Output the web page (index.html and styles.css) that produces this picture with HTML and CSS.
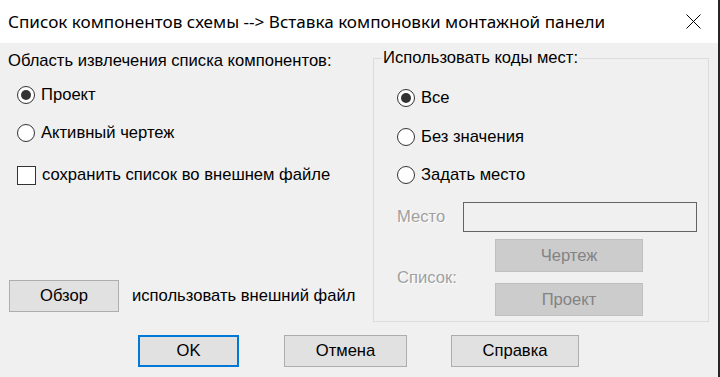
FILE: index.html
```html
<!DOCTYPE html>
<html lang="ru">
<head>
    <meta charset="UTF-8">
    <title>Список компонентов схемы</title>
    <link rel="stylesheet" href="styles.css">
</head>
<body>

    <!-- Title bar -->
    <div class="titlebar">
        <span class="title">Список компонентов схемы --&gt; Вставка компоновки монтажной панели</span>
        <svg class="close" width="15" height="15" viewBox="0 0 15 15">
            <path d="M0.5 0.5 L14.5 14.5 M14.5 0.5 L0.5 14.5" stroke="#000" stroke-width="1" fill="none"/>
        </svg>
    </div>

    <div class="content">
        <!-- Left part: source of the list -->
        <div class="left">
            <div class="heading">Область извлечения списка компонентов:</div>

            <div class="option first">
                <span class="radio checked"></span>
                <span>Проект</span>
            </div>
            <div class="option second">
                <span class="radio"></span>
                <span>Активный чертеж</span>
            </div>
            <div class="option third">
                <span class="check"></span>
                <span>сохранить список во внешнем файле</span>
            </div>

            <div class="browse-row">
                <button class="btn browse">Обзор</button>
                <span class="browse-label">использовать внешний файл</span>
            </div>
        </div>

        <!-- Right part: location codes -->
        <fieldset class="group">
            <legend>Использовать коды мест:</legend>

            <div class="option g1">
                <span class="radio checked"></span>
                <span>Все</span>
            </div>
            <div class="option g2">
                <span class="radio"></span>
                <span>Без значения</span>
            </div>
            <div class="option g3">
                <span class="radio"></span>
                <span>Задать место</span>
            </div>

            <div class="place-row">
                <span class="disabled-label">Место</span>
                <input class="place-input" type="text" disabled>
            </div>

            <div class="list-row">
                <span class="disabled-label">Список:</span>
                <div class="list-buttons">
                    <button class="btn off" disabled>Чертеж</button>
                    <button class="btn off" disabled>Проект</button>
                </div>
            </div>
        </fieldset>
    </div>

    <!-- Dialog buttons -->
    <div class="actions">
        <button class="btn ok">OK</button>
        <button class="btn cancel">Отмена</button>
        <button class="btn help">Справка</button>
    </div>

</body>
</html>
```

FILE: styles.css
```css
html, body {
    margin: 0;
    padding: 0;
}

body {
    width: 720px;
    height: 377px;
    box-sizing: border-box;
    background-color: #f0f0f0;
    border-right: 2px solid #262626;
    font-family: "Liberation Sans", Arial, sans-serif;
    font-size: 16.6px;
    color: #000;
    overflow: hidden;
}

/* Title bar */
.titlebar {
    height: 43px;
    background-color: #ffffff;
    display: flex;
    align-items: center;
    padding: 0 17px 0 8px;
}

.title {
    font-family: "Noto Sans", sans-serif;
    font-size: 17.1px;
    line-height: 20px;
}

.close {
    margin-left: auto;
}

/* Main area */
.content {
    display: flex;
    padding-left: 8px;
}

.left {
    width: 365px;
    display: flex;
    flex-direction: column;
    padding-bottom: 10px;
}

.heading {
    line-height: 20px;
    margin-top: 8px;
}

.option {
    display: flex;
    align-items: center;
    height: 20px;
    line-height: 20px;
    padding-left: 9px;
    gap: 6px;
}

.option.first { margin-top: 14px; }
.option.second { margin-top: 18px; }
.option.third { margin-top: 22px; }

.radio {
    width: 18px;
    height: 18px;
    box-sizing: border-box;
    border: 1px solid #333;
    border-radius: 50%;
    background-color: #fff;
    display: flex;
    align-items: center;
    justify-content: center;
}

.radio.checked::after {
    content: "";
    width: 10px;
    height: 10px;
    border-radius: 50%;
    background-color: #333;
}

.check {
    width: 19px;
    height: 19px;
    box-sizing: border-box;
    border: 1px solid #333;
    background-color: #fff;
}

.browse-row {
    margin-top: auto;
    display: flex;
    align-items: center;
}

.browse-label {
    margin-left: 13px;
    line-height: 20px;
}

/* Buttons */
.btn {
    font-family: "Liberation Sans", Arial, sans-serif;
    font-size: 16.6px;
    height: 32px;
    padding: 0;
    background-color: #e1e1e1;
    border: 1px solid #adadad;
    color: #000;
}

.browse {
    width: 110px;
    margin-left: 1px;
}

.btn.off {
    width: 148px;
    height: 33px;
    background-color: #cccccc;
    border-color: #bfbfbf;
    color: #838383;
}

/* Group box */
.group {
    margin: 5px 0 0 0;
    width: 336px;
    box-sizing: border-box;
    border: 1px solid #dcdcdc;
    padding: 0 11px 5px 23px;
}

.group legend {
    line-height: 20px;
    padding: 0 1px;
    margin-left: -15px;
}

.group .option {
    padding-left: 0;
}

.option.g1 { margin-top: 20px; }
.option.g2 { margin-top: 19px; }
.option.g3 { margin-top: 18px; }

.disabled-label {
    color: #a0a0a0;
    text-shadow: 1px 1px 0 #ffffff;
    line-height: 20px;
}

.place-row {
    display: flex;
    align-items: center;
    margin-top: 17px;
}

.place-input {
    margin-left: auto;
    width: 234px;
    height: 30px;
    box-sizing: border-box;
    border: 1px solid #646464;
    background-color: #f0f0f0;
    padding: 0;
}

.list-row {
    display: flex;
    align-items: center;
    margin-top: 7px;
}

.list-buttons {
    margin-left: auto;
    margin-right: 54px;
    display: flex;
    flex-direction: column;
    gap: 11px;
}

/* Dialog buttons */
.actions {
    display: flex;
    margin-top: 13px;
    padding-left: 138px;
}

.ok {
    width: 101px;
    border: 2px solid #0078d7;
}

.cancel {
    width: 123px;
    margin-left: 45px;
}

.help {
    width: 128px;
    margin-left: 44px;
}
```
